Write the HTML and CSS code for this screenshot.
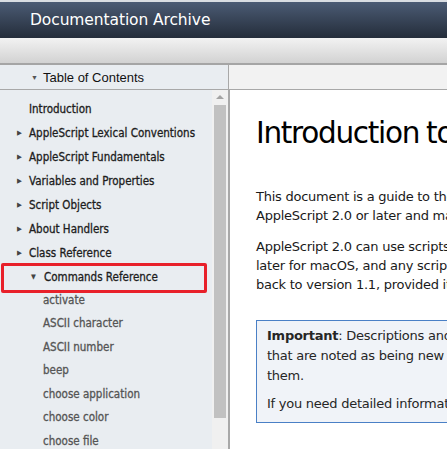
FILE: index.html
```html
<!DOCTYPE html>
<html>
<head>
<meta charset="utf-8">
<link rel="stylesheet" href="styles.css">
</head>
<body>
<div class="page">
  <div class="topline"></div>
  <header class="header"><span class="title">Documentation Archive</span></header>
  <div class="toolbar"></div>
  <div class="tocbar">
    <div class="tocbar-left"><span class="tri down">&#9660;</span>Table of Contents</div>
    <div class="tocbar-right"></div>
  </div>
  <div class="main">
    <nav class="sidebar">
      <ul class="toc">
        <li class="item"><span class="tri"></span>Introduction</li>
        <li class="item"><span class="tri">&#9654;</span>AppleScript Lexical Conventions</li>
        <li class="item"><span class="tri">&#9654;</span>AppleScript Fundamentals</li>
        <li class="item"><span class="tri">&#9654;</span>Variables and Properties</li>
        <li class="item"><span class="tri">&#9654;</span>Script Objects</li>
        <li class="item"><span class="tri">&#9654;</span>About Handlers</li>
        <li class="item"><span class="tri">&#9654;</span>Class Reference</li>
        <li class="item open"><span class="tri down">&#9660;</span>Commands Reference</li>
        <li class="sub">activate</li>
        <li class="sub">ASCII character</li>
        <li class="sub">ASCII number</li>
        <li class="sub">beep</li>
        <li class="sub">choose application</li>
        <li class="sub">choose color</li>
        <li class="sub">choose file</li>
      </ul>
      <div class="scrollbar">
        <div class="arrow"></div>
        <div class="thumb"></div>
      </div>
    </nav>
    <div class="divider"></div>
    <article class="content">
      <h1 class="heading">Introduction to AppleScript Language Guide</h1>
      <p class="para">This document is a guide to the AppleScript language—its lexical conventions, syntax, keywords, and other elements. It is intended for use with<br>AppleScript 2.0 or later and macOS version 10.5 or later.</p>
      <p class="para">AppleScript 2.0 can use scripts developed for any version of AppleScript from 1.1 through 1.10.7, any scripting additions created for AppleScript 1.5 or<br>later for macOS, and any scripting additions created for AppleScript from 1.1<br>back to version 1.1, provided it is compatible with the current release.</p>
      <div class="note">
        <p class="note-p"><b>Important</b>: Descriptions and examples for the terminology in this document assume the current version of AppleScript. Features<br>that are noted as being new in a given version may not work in earlier versions of AppleScript for<br>them.</p>
        <p class="note-p">If you need detailed information about earlier versions of AppleScript, see the release notes.</p>
      </div>
    </article>
  </div>
</div>
</body>
</html>
```
FILE: styles.css
```css
html, body {
  margin: 0;
  padding: 0;
  overflow: hidden;
}
body {
  width: 447px;
  height: 449px;
  font-family: "DejaVu Sans", "Liberation Sans", sans-serif;
  background: #fff;
}
.page {
  display: flex;
  flex-direction: column;
  height: 449px;
}
.topline {
  height: 2px;
  background: #d9dde2;
}
.header {
  height: 36px;
  background: linear-gradient(#4b5b74, #242d3a);
  display: flex;
  align-items: center;
  padding-left: 30px;
}
.title {
  color: #fff;
  font-size: 15.5px;
  letter-spacing: -0.1px;
}
.toolbar {
  height: 25px;
  background: linear-gradient(#f2f2f2, #d2d2d2);
  border-bottom: 2px solid #a5a5a5;
}
.tocbar {
  display: flex;
  height: 24px;
  border-bottom: 1px solid #a8a8a8;
}
.tocbar-left {
  width: 229px;
  background: #e9edf1;
  border-right: 1px solid #a8a8a8;
  display: flex;
  align-items: center;
  padding-left: 31px;
  box-sizing: border-box;
  font-family: "Liberation Sans", sans-serif;
  font-size: 13px;
  color: #111;
}
.tocbar-left .tri {
  font-size: 7px;
  color: #555;
  margin-right: 5px;
  width: auto;
}
.tocbar-right {
  flex: 1;
  background: #f2f2f2;
}
.main {
  flex: 1;
  display: flex;
  min-height: 0;
}
.sidebar {
  width: 228px;
  background: #e9edf1;
  display: flex;
  flex-shrink: 0;
}
.toc {
  list-style: none;
  margin: 0;
  padding: 7px 0 0 0;
  width: 212px;
  font-family: "DejaVu Sans Condensed", "DejaVu Sans", sans-serif;
  font-size: 11.5px;
  white-space: nowrap;
  -webkit-text-stroke: 0.3px currentColor;
}
.item {
  height: 24px;
  display: flex;
  align-items: center;
  color: #1d1d1d;
  padding-left: 17px;
  position: relative;
}
.tri {
  width: 12px;
  font-size: 7px;
  color: #444;
  flex-shrink: 0;
  -webkit-text-stroke: 0;
}
.item.open {
  padding-left: 31px;
  height: 23px;
}
.item.open::after {
  content: "";
  position: absolute;
  left: 1px;
  top: -2px;
  width: 200px;
  height: 24px;
  border: 3px solid #e8202a;
  border-radius: 2px;
}
.item.open .tri {
  width: 13px;
}
.sub {
  height: 23.5px;
  display: flex;
  align-items: center;
  padding-left: 43px;
  color: #555;
}
.scrollbar {
  width: 16px;
  background: #f0f0f0;
}
.arrow {
  margin: 5px auto 0;
  width: 0;
  height: 0;
  border-left: 4px solid transparent;
  border-right: 4px solid transparent;
  border-bottom: 4px solid #a3a3a3;
}
.thumb {
  margin: 6px 2px 0 2px;
  height: 313px;
  background: #c1c1c1;
}
.divider {
  width: 2px;
  background: #a8a8a8;
  flex-shrink: 0;
}
.content {
  flex: 1;
  padding-left: 26px;
  white-space: nowrap;
  overflow: hidden;
  font-size: 13px;
  letter-spacing: -0.25px;
  color: #1a1a1a;
}
.heading {
  font-weight: normal;
  font-size: 29.5px;
  letter-spacing: -1.3px;
  word-spacing: -1px;
  margin: 26px 0 37px;
  color: #000;
}
.para {
  margin: 0 0 12px;
  line-height: 19px;
}
.note {
  margin-top: 26px;
  border: 1px solid #4a80c6;
  border-right: none;
  background: #f0f3f8;
  padding: 5px 0 8px 10px;
}
.note-p {
  margin: 0 0 8px;
  line-height: 20px;
  color: #262626;
}
.note-p:last-child {
  margin-bottom: 0;
}
```
